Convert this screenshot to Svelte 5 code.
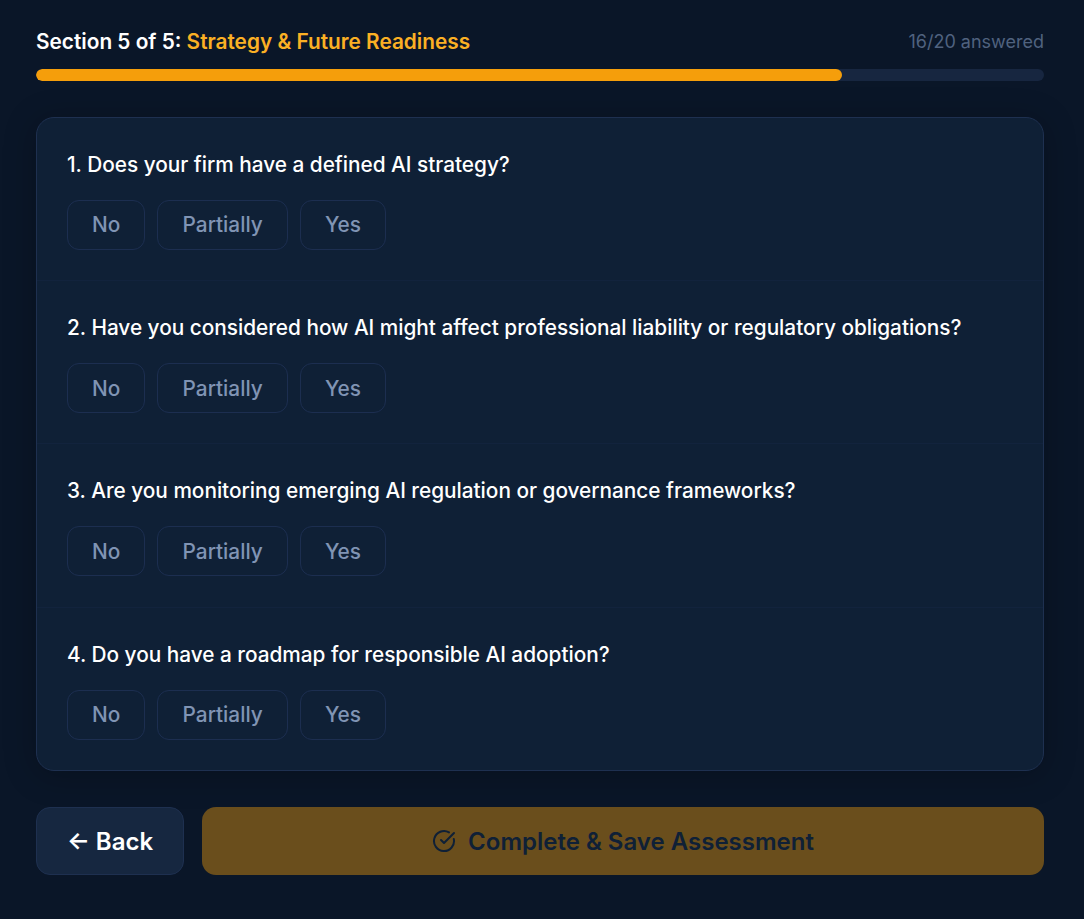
<script lang="ts">
  const questions = [
    "Does your firm have a defined AI strategy?",
    "Have you considered how AI might affect professional liability or regulatory obligations?",
    "Are you monitoring emerging AI regulation or governance frameworks?",
    "Do you have a roadmap for responsible AI adoption?",
  ];
  const options = ["No", "Partially", "Yes"];
  const answered = 16;
  const total = 20;
</script>

<main class="page">
  <header class="head">
    <div class="title">Section 5 of 5: <span class="accent">Strategy &amp; Future Readiness</span></div>
    <div class="count">{answered}/{total} answered</div>
  </header>
  <div class="track"><div class="fill" style="width:{(answered / total) * 100}%"></div></div>

  <section class="card">
    {#each questions as q, i}
      <div class="question">
        <p class="label">{i + 1}. {q}</p>
        <div class="options">
          {#each options as opt}
            <button class="opt" type="button">{opt}</button>
          {/each}
        </div>
      </div>
    {/each}
  </section>

  <footer class="actions">
    <button class="back" type="button">← Back</button>
    <button class="save" type="button">
      <svg width="24" height="24" viewBox="0 0 24 24" fill="none" stroke="currentColor" stroke-width="2" stroke-linecap="round" stroke-linejoin="round">
        <path d="M21.801 10A10 10 0 1 1 17 3.335" />
        <path d="m9 11 3 3L22 4" />
      </svg>
      Complete &amp; Save Assessment
    </button>
  </footer>
</main>

<style>
  :global(body) {
    margin: 0;
    background: #0a1628;
  }
  .page {
    box-sizing: border-box;
    min-height: 919px;
    padding: 28px 40px 44px 36px;
    font-family: Inter, "Liberation Sans", sans-serif;
    color: #fff;
  }
  .head {
    display: flex;
    justify-content: space-between;
    align-items: center;
    height: 27px;
    margin-bottom: 14px;
  }
  .title {
    font-size: 20.8px;
    font-weight: 600;
  }
  .accent {
    color: #fbb024;
  }
  .count {
    font-size: 18px;
    line-height: 26px;
    color: #50627f;
  }
  .track {
    height: 12px;
    border-radius: 6px;
    background: #172640;
    overflow: hidden;
    margin-bottom: 36px;
  }
  .fill {
    height: 100%;
    border-radius: 6px;
    background: #f59e0b;
  }
  .card {
    border: 1px solid #1e3050;
    border-radius: 18px;
    background: #0f2036;
    box-shadow: 0 4px 32px rgba(0, 0, 0, 0.25);
    overflow: hidden;
  }
  .question {
    padding: 30px 30px 30.45px;
    border-bottom: 1px solid #12233d;
  }
  .question:last-child {
    border-bottom: none;
  }
  .label {
    margin: 0 0 18.6px;
    font-size: 20.8px;
    font-weight: 500;
    line-height: 33.2px;
    letter-spacing: -0.015px;
  }
  .options {
    display: flex;
    gap: 12px;
  }
  .opt {
    height: 50px;
    padding: 0 24.1px;
    border: 1px solid #1c2e50;
    border-radius: 12px;
    background: transparent;
    color: #8094b4;
    font: 500 20.8px Inter, "Liberation Sans", sans-serif;
  }
  .actions {
    display: flex;
    gap: 18px;
    margin-top: 36px;
  }
  .back,
  .save {
    display: flex;
    align-items: center;
    justify-content: center;
    height: 68px;
    padding-top: 2px;
    border-radius: 14px;
    font: 600 24px Inter, "Liberation Sans", sans-serif;
  }
  .back {
    width: 148px;
    border: 1px solid #1e3050;
    background: #162740;
    color: #fff;
  }
  .save {
    flex: 1;
    gap: 12px;
    border: none;
    background: #6a4e1c;
    color: #0f2036;
  }
</style>
